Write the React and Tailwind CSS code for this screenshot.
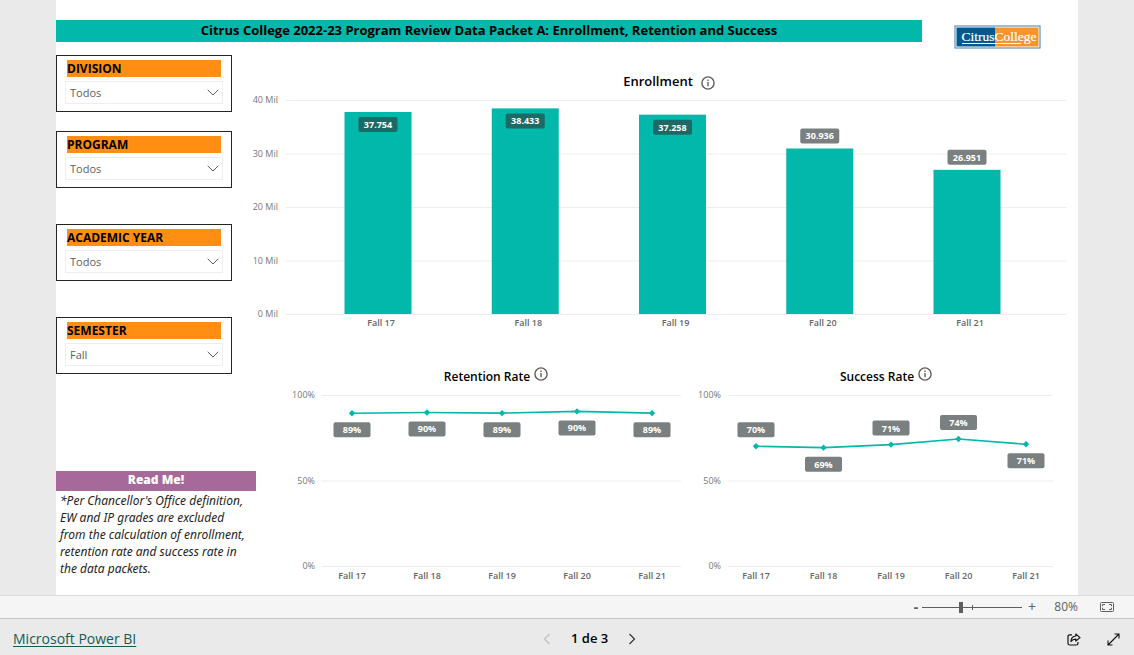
const slicers = [
  { id: "division", label: "DIVISION", value: "Todos", spacing: "" },
  { id: "program", label: "PROGRAM", value: "Todos", spacing: "mt-[19px]" },
  { id: "year", label: "ACADEMIC YEAR", value: "Todos", spacing: "mt-9" },
  { id: "semester", label: "SEMESTER", value: "Fall", spacing: "mt-9" },
];

const enrollment = [
  { term: "Fall 17", total: 37754 },
  { term: "Fall 18", total: 38433 },
  { term: "Fall 19", total: 37258 },
  { term: "Fall 20", total: 30936 },
  { term: "Fall 21", total: 26951 },
];

const retention = [
  { term: "Fall 17", rate: 89.3, below: true },
  { term: "Fall 18", rate: 89.8, below: true },
  { term: "Fall 19", rate: 89.4, below: true },
  { term: "Fall 20", rate: 90.4, below: true },
  { term: "Fall 21", rate: 89.4, below: true },
];

const success = [
  { term: "Fall 17", rate: 70 },
  { term: "Fall 18", rate: 69.2, below: true },
  { term: "Fall 19", rate: 71 },
  { term: "Fall 20", rate: 74.3 },
  { term: "Fall 21", rate: 71.2, below: true },
];

function InfoIcon() {
  return (
    <svg viewBox="0 0 14 14" className="h-3.5 w-3.5 shrink-0" aria-hidden="true">
      <circle cx="7" cy="7" r="6.1" fill="none" stroke="#605e5c" strokeWidth="1.4" />
      <path d="M7 6v4.3M7 3.6v1.3" stroke="#605e5c" strokeWidth="1.4" />
    </svg>
  );
}

function Logo() {
  return (
    <svg viewBox="0 0 87 24" className="h-6 w-[87px]" role="img" aria-label="Citrus College">
      <rect x="1" y="1" width="85" height="22" fill="#fff" stroke="#3f7fae" />
      <rect x="2.5" y="2.5" width="38.5" height="19" fill="#005a8f" />
      <rect x="41" y="2.5" width="43.5" height="19" fill="#f7942b" />
      <g fill="#fff" stroke="#fff" strokeWidth="0.2" fontFamily="Liberation Serif, serif" fontSize="13.5">
        <text x="40.5" y="16" textAnchor="end">Citrus</text>
        <text x="40.5" y="16">College</text>
      </g>
      <path d="M8 18.5h59" stroke="#fff" />
    </svg>
  );
}

function Slicer({ id, label, value, spacing }) {
  return (
    <div className={`w-44 border border-[#252423] px-2 pt-1 pb-[7px] ${spacing}`}>
      <label htmlFor={id} className="mx-0.5 block bg-[#ff8e12] text-xs leading-[17px] font-bold">
        {label}
      </label>
      <div className="relative mt-1">
        <select
          id={id}
          defaultValue={value}
          className="block h-[23px] w-full appearance-none border border-[#eee] bg-white pt-0.5 pl-1 text-[11px] text-[#605e5c]"
        >
          <option>{value}</option>
        </select>
        <svg
          viewBox="0 0 12 7"
          className="pointer-events-none absolute top-2 right-1 h-[7px] w-3"
          fill="none"
          stroke="#605e5c"
        >
          <path d="M0.7 0.8L6 6L11.3 0.8" />
        </svg>
      </div>
    </div>
  );
}

function DataLabel({ x, y, text, width, fill }) {
  return (
    <g>
      <rect x={x - width / 2} y={y} width={width} height="15" rx="2" fill={fill} />
      <text x={x} y={y + 11} textAnchor="middle" fontSize="9" fontWeight="700" fill="#fff">
        {text}
      </text>
    </g>
  );
}

function EnrollmentChart() {
  const base = 219;
  return (
    <svg viewBox="0 0 822 236" className="block w-full overflow-visible">
      {[40, 30, 20, 10, 0].map((n, i) => (
        <g key={n}>
          <path d={`M30 ${5.5 + i * 53.5}H810`} stroke="#ededed" />
          <text x="22" y={8 + i * 53.5} textAnchor="end" fontSize="9" fill="#777">
            {n} Mil
          </text>
        </g>
      ))}
      {enrollment.map(({ term, total }, i) => {
        const x = 122 + i * 147.25;
        const h = (total / 40000) * 214;
        const inside = total > 35000;
        return (
          <g key={term}>
            <rect x={x - 33.5} y={base - h} width="67" height={h} fill="#01b8aa" />
            <DataLabel
              x={x}
              y={inside ? base - h + 5 : base - h - 20}
              width={39}
              text={total.toLocaleString("de-DE")}
              fill={inside ? "#1c6a65" : "#7a8080"}
            />
            <text x={x + 3} y="231" textAnchor="middle" fontSize="9" fontWeight="600" fill="#666">
              {term}
            </text>
          </g>
        );
      })}
    </svg>
  );
}

function RateChart({ data, left, right, first, step }) {
  const points = data.map((d, i) => ({
    ...d,
    x: first + i * step,
    y: 181 - d.rate * 1.71,
  }));
  return (
    <svg viewBox="0 0 396 198" className="block w-full">
      {[100, 50, 0].map((n, i) => (
        <g key={n}>
          <path d={`M${left} ${10.5 + i * 85.5}H${right}`} stroke="#ededed" />
          <text x={left - 7} y={13 + i * 85.5} textAnchor="end" fontSize="9" fill="#777">
            {n}%
          </text>
        </g>
      ))}
      <polyline
        points={points.map((p) => `${p.x},${p.y}`).join(" ")}
        fill="none"
        stroke="#01b8aa"
        strokeWidth="1.6"
      />
      {points.map(({ term, rate, x, y, below }) => (
        <g key={term}>
          <path d={`M${x - 3.2} ${y}l3.2 -3.2l3.2 3.2l-3.2 3.2z`} fill="#01b8aa" />
          <DataLabel
            x={x}
            y={below ? y + 9 : y - 24}
            width={37}
            text={`${Math.round(rate)}%`}
            fill="#7a8080"
          />
          <text x={x} y="194" textAnchor="middle" fontSize="9" fontWeight="600" fill="#666">
            {term}
          </text>
        </g>
      ))}
    </svg>
  );
}

function StatusBar() {
  return (
    <div className="flex h-6 items-center justify-end border-y border-t-[#dcdcdc] border-b-[#c4c4c4] bg-[#f5f5f5] pr-5 text-[#605e5c]">
      <button className="w-2 text-sm leading-none font-bold" aria-label="Zoom out">-</button>
      <div className="relative mx-0.5 flex h-4 w-[100px] items-center">
        <input
          type="range"
          min="10"
          max="150"
          defaultValue="64"
          aria-label="Zoom"
          className="h-px w-full appearance-none bg-[#605e5c] [&::-webkit-slider-thumb]:h-[11px] [&::-webkit-slider-thumb]:w-1 [&::-webkit-slider-thumb]:appearance-none [&::-webkit-slider-thumb]:bg-[#605e5c]"
        />
        <span className="pointer-events-none absolute left-1/2 h-[5px] w-px bg-[#605e5c]" />
      </div>
      <button className="ml-0.5 w-3 text-sm leading-none" aria-label="Zoom in">+</button>
      <span className="ml-3 w-7 text-right text-xs">80%</span>
      <button className="ml-[22px]" aria-label="Fit to page">
        <svg viewBox="0 0 14 10" className="h-2.5 w-3.5" fill="none" stroke="#605e5c">
          <rect x="0.5" y="0.5" width="13" height="9" rx="1" />
          <path d="M5 2.5H2.5v1.7M9 2.5h2.5v1.7M5 7.5H2.5V5.8M9 7.5h2.5V5.8" />
        </svg>
      </button>
    </div>
  );
}

function Footer() {
  return (
    <footer className="flex h-9 items-center justify-between pt-1 pr-3.5 pl-[13px]">
      <a href="#" className="text-sm text-[#115e57] underline underline-offset-2">
        Microsoft Power BI
      </a>
      <div className="flex items-center gap-[18px] pr-6 text-[13px] font-semibold">
        <button aria-label="Previous page">
          <svg viewBox="0 0 12 12" className="h-3 w-3" fill="none" stroke="#c0c0c0" strokeWidth="1.2">
            <path d="M8.5 1L3.5 6l5 5" />
          </svg>
        </button>
        <span>1 de 3</span>
        <button aria-label="Next page">
          <svg viewBox="0 0 12 12" className="h-3 w-3" fill="none" stroke="#333" strokeWidth="1.2">
            <path d="M3.5 1l5 5l-5 5" />
          </svg>
        </button>
      </div>
      <div className="flex items-center gap-[26px]">
        <button aria-label="Share">
          <svg viewBox="0 0 14 13" className="h-[13px] w-3.5" fill="none" stroke="#111" strokeWidth="1.2" strokeLinejoin="round">
            <path d="M5 1.8H2.8Q1 1.8 1 3.6V10.2Q1 12 2.8 12H9.2Q11 12 11 10.2V9" />
            <path d="M8.8 1L13 4.6L8.8 8V6.1Q5.6 6 4 8.5Q4 3.5 8.8 3Z" />
          </svg>
        </button>
        <button aria-label="Full screen">
          <svg viewBox="0 0 13 13" className="h-[13px] w-[13px]" fill="none" stroke="#111" strokeWidth="1.1">
            <path d="M1 12L12 1M7.5 1H12V5.5M1 7.5V12H5.5" />
          </svg>
        </button>
      </div>
    </footer>
  );
}

export default function App() {
  return (
    <div className="flex min-h-screen flex-col bg-[#eaeaea] font-['Open_Sans','Noto_Sans',sans-serif] text-black">
      <main className="mx-14 flex-1 bg-white pt-5">
        <header className="flex items-start">
          <h1 className="h-[22px] flex-1 bg-[#01b8aa] text-center text-[13px] leading-5 font-bold">
            Citrus College 2022-23 Program Review Data Packet A: Enrollment, Retention and Success
          </h1>
          <div className="mt-[5px] mr-[37px] ml-8">
            <Logo />
          </div>
        </header>

        <div className="flex pt-1.5">
          {/* Filters and note */}
          <aside className="w-[200px] shrink-0">
            {slicers.map((s) => (
              <Slicer key={s.id} {...s} />
            ))}
            <section className="mt-[97px]">
              <h2 className="h-5 bg-[#a66999] text-center text-xs leading-[18px] font-extrabold text-white">
                Read Me!
              </h2>
              <p className="pt-px pr-2 pl-1 font-['Noto_Sans',sans-serif] text-xs leading-[17px] text-[#252423] italic">
                *Per Chancellor's Office definition, EW and IP grades are excluded from the
                calculation of enrollment, retention rate and success rate in the data packets.
              </p>
            </section>
          </aside>

          {/* Charts */}
          <div className="min-w-0 flex-1 pt-4">
            <section>
              <div className="flex h-6 items-center justify-center gap-2 pl-1">
                <h2 className="pb-1 text-[13px] leading-5 font-semibold">Enrollment</h2>
                <InfoIcon />
              </div>
              <EnrollmentChart />
            </section>
            <div className="grid grid-cols-2 pt-8 pl-[30px]">
              <section>
                <div className="flex h-[22px] items-center justify-center gap-1 pl-6">
                  <h2 className="pt-1.5 text-xs leading-5 font-semibold">Retention Rate</h2>
                  <InfoIcon />
                </div>
                <RateChart data={retention} left={36} right={395} first={66} step={75} />
              </section>
              <section>
                <div className="flex h-[22px] items-center justify-center gap-1 pl-3">
                  <h2 className="pt-1.5 text-xs leading-5 font-semibold">Success Rate</h2>
                  <InfoIcon />
                </div>
                <RateChart data={success} left={46} right={371} first={74} step={67.5} />
              </section>
            </div>
          </div>
        </div>
      </main>
      <StatusBar />
      <Footer />
    </div>
  );
}
